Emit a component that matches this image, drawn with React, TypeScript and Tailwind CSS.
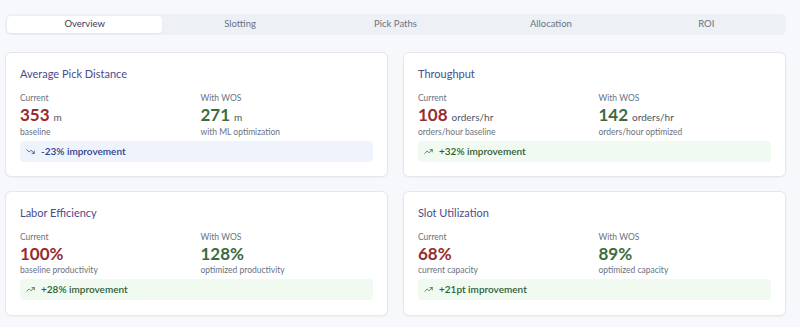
import { TrendingDown, TrendingUp } from "lucide-react";

type Metric = {
  title: string;
  current: string;
  currentUnit?: string;
  currentNote: string;
  wos: string;
  wosUnit?: string;
  wosNote: string;
  delta: string;
  down?: boolean;
};

const TABS = ["Overview", "Slotting", "Pick Paths", "Allocation", "ROI"];

const METRICS: Metric[] = [
  {
    title: "Average Pick Distance",
    current: "353",
    currentUnit: "m",
    currentNote: "baseline",
    wos: "271",
    wosUnit: "m",
    wosNote: "with ML optimization",
    delta: "-23% improvement",
    down: true,
  },
  {
    title: "Throughput",
    current: "108",
    currentUnit: "orders/hr",
    currentNote: "orders/hour baseline",
    wos: "142",
    wosUnit: "orders/hr",
    wosNote: "orders/hour optimized",
    delta: "+32% improvement",
  },
  {
    title: "Labor Efficiency",
    current: "100%",
    currentNote: "baseline productivity",
    wos: "128%",
    wosNote: "optimized productivity",
    delta: "+28% improvement",
  },
  {
    title: "Slot Utilization",
    current: "68%",
    currentNote: "current capacity",
    wos: "89%",
    wosNote: "optimized capacity",
    delta: "+21pt improvement",
  },
];

function Value({ label, value, unit, note, tone }: { label: string; value: string; unit?: string; note: string; tone: string }) {
  return (
    <div className="flex flex-col">
      <span className="text-[8.5px] leading-[12px] text-gray-500">{label}</span>
      <div className="mt-[2px] flex items-baseline gap-[4px]">
        <span className={`text-[17px] font-bold leading-[18px] ${tone}`}>{value}</span>
        {unit && <span className="text-[10px] text-gray-600">{unit}</span>}
      </div>
      <span className="mt-[1px] text-[8.5px] leading-[12px] text-gray-500">{note}</span>
    </div>
  );
}

function MetricCard({ m }: { m: Metric }) {
  return (
    <div className="h-[125px] rounded-md border border-gray-200 bg-white px-[14px] pt-[14px] shadow-[0_1px_2px_rgba(0,0,0,0.04)]">
      <h3 className="text-[11px] leading-[14px] text-[#4b4b8c]">{m.title}</h3>
      <div className="mt-[11px] grid grid-cols-2 gap-2">
        <Value label="Current" value={m.current} unit={m.currentUnit} note={m.currentNote} tone="text-[#962d2d]" />
        <Value label="With WOS" value={m.wos} unit={m.wosUnit} note={m.wosNote} tone="text-[#3b6b40]" />
      </div>
      <div
        className={`mt-[3px] flex h-[21px] items-center gap-[6px] rounded px-[6px] text-[10px] font-semibold ${
          m.down ? "bg-[#eef3fc] text-[#2f3f8f]" : "bg-[#f0faf1] text-[#2f5e35]"
        }`}
      >
        {m.down ? <TrendingDown size={9} strokeWidth={2} /> : <TrendingUp size={9} strokeWidth={2} />}
        <span>{m.delta}</span>
      </div>
    </div>
  );
}

export default function App() {
  return (
    <div className="h-[327px] w-[800px] overflow-hidden bg-[#f6f8fb] pl-[5px] pr-[14px] pt-[14px] font-['Lato',sans-serif]">
      <div className="grid h-[21px] grid-cols-5 rounded-md bg-[#edf0f5] p-[2px]">
        {TABS.map((t, i) => (
          <div
            key={t}
            className={`flex items-center justify-center rounded text-[9.5px] ${
              i === 0 ? "bg-white text-gray-700 shadow-[0_1px_2px_rgba(0,0,0,0.05)]" : "text-gray-500"
            }`}
          >
            {t}
          </div>
        ))}
      </div>
      <div className="mt-[17px] grid grid-cols-2 gap-x-[15px] gap-y-[14px]">
        {METRICS.map((m) => (
          <MetricCard key={m.title} m={m} />
        ))}
      </div>
    </div>
  );
}
